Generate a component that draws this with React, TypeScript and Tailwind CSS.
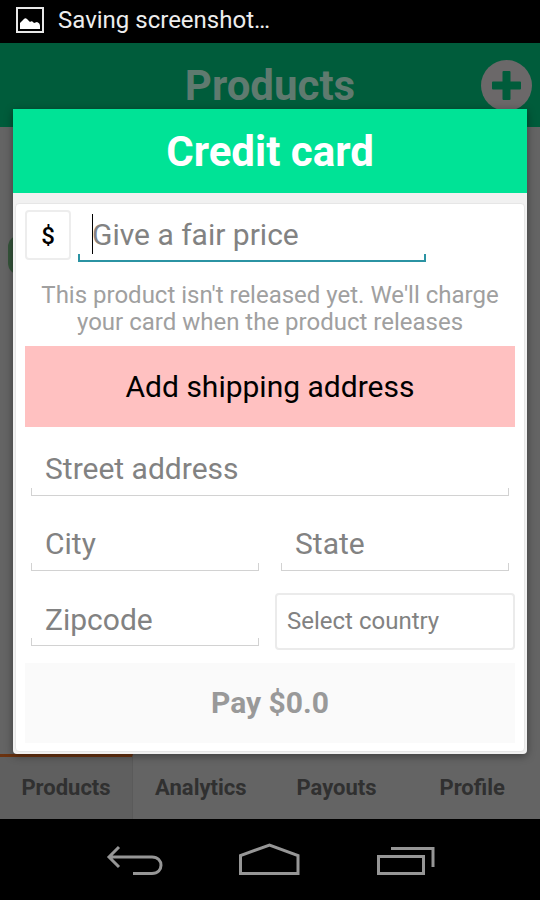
import type { InputHTMLAttributes } from "react";
import clsx from "clsx";

const tabs = ["Products", "Analytics", "Payouts", "Profile"];

interface FieldProps extends InputHTMLAttributes<HTMLInputElement> {
  label: string;
  active?: boolean;
}

function Field({ label, active, className, ...rest }: FieldProps) {
  return (
    <div className={clsx("relative flex min-w-0 flex-col", className)}>
      <input
        aria-label={label}
        placeholder={label}
        className="h-[46px] w-full bg-transparent px-3.5 text-[30px] text-black caret-transparent outline-none placeholder:text-[#828282]"
        {...rest}
      />
      {active && <span className="absolute top-0.5 left-3.5 h-10 w-px bg-black" />}
      <span
        className={clsx(
          "pointer-events-none -mt-1 h-2",
          active ? "border-x-2 border-b-2 border-[#2b93a3]" : "border-x border-b border-[#d2d2d2]"
        )}
      />
    </div>
  );
}

function StatusBar() {
  return (
    <div className="flex h-[43px] items-center gap-3.5 bg-black px-4 pb-1 text-2xl text-[#ededed]">
      <svg width="28" height="26" viewBox="0 0 28 26" fill="none">
        <rect x="1" y="1" width="26" height="24" stroke="#e8e8e8" strokeWidth="2" />
        <path d="M4 22V16Q6 14 7 13Q9 10 11 12L14 15Q16 13 18 16L21 15Q24 16 24 19V22Z" fill="#fff" />
      </svg>
      <p>Saving screenshot…</p>
    </div>
  );
}

function ProductsScreen() {
  return (
    <div className="flex flex-1 flex-col bg-[#646464]">
      <header className="relative flex h-[84px] items-center justify-center bg-[#005c3b]">
        <h1 className="text-[42px] font-bold text-[#5f7a6f]">Products</h1>
        <button aria-label="Add product" className="absolute right-2">
          <svg width="51" height="51" viewBox="0 0 51 51" fill="none">
            <circle cx="25.500" cy="25.500" r="25.500" fill="#6b6869" />
            <path
              d="M22.500 11h6q1 0 1 1v9.500h9.500q1 0 1 1v6q0 1-1 1h-9.500V39q0 1-1 1h-6q-1 0-1-1v-9.500H12q-1 0-1-1v-6q0-1 1-1h9.500V12q0-1 1-1z"
              fill="#005c3b"
            />
          </svg>
        </button>
      </header>
      <main className="flex-1 px-2 pt-[108px]">
        <div className="h-10 w-16 rounded-xl bg-[#35543a]" />
      </main>
      <nav className="flex h-[65px] text-[22px] font-bold text-[#303030]">
        {tabs.map((tab, i) => (
          <a
            key={tab}
            href="#"
            className={clsx(
              "flex items-center justify-center border-t-3 pb-0.5",
              i === 0
                ? "w-[133px] border-t-[#6b3310] border-r border-r-[#5a5a5a] bg-[#5f5f5f]"
                : "flex-1 border-transparent"
            )}
          >
            {tab}
          </a>
        ))}
      </nav>
    </div>
  );
}

function CreditCardDialog() {
  return (
    <section
      role="dialog"
      aria-label="Credit card"
      className="w-full rounded-b-sm bg-[#f1f1f1] shadow-[0_2px_8px_rgba(0,0,0,0.4)]"
    >
      <h2 className="flex h-[84px] items-center justify-center bg-[#00e396] pt-0.5 text-[42px] font-bold text-white">
        Credit card
      </h2>
      <form className="mx-0.5 mt-2.5 mb-0.5 rounded-sm border border-[#e6e6e6] bg-white px-[9px] pt-1.5 pb-2">
        <div className="flex items-start gap-[7px]">
          <span className="flex h-[50px] w-[46px] items-center justify-center rounded-sm border-2 border-[#ededed] pt-0.5 text-2xl font-medium text-black">
            $
          </span>
          <Field label="Give a fair price" active className="mt-0.5 mr-[89px] flex-1" />
        </div>
        <p className="mt-5 text-center text-2xl leading-[27px] text-[#a0a0a0]">
          This product isn't released yet. We'll charge your card when the product releases
        </p>
        <button type="button" className="mt-2.5 h-[81px] w-full bg-[#ffc1c1] text-[30px] text-black">
          Add shipping address
        </button>
        <Field label="Street address" className="mx-1.5 mt-[19px]" />
        <div className="mx-1.5 mt-[25px] grid grid-cols-2 gap-[22px]">
          <Field label="City" />
          <Field label="State" />
        </div>
        <div className="mt-[22px] ml-1.5 flex items-center gap-4">
          <Field label="Zipcode" className="flex-1" />
          <select
            aria-label="Select country"
            defaultValue=""
            className="h-[57px] w-60 appearance-none rounded-sm border-2 border-[#ebebeb] bg-white px-2.5 text-2xl text-[#828282]"
          >
            <option value="">Select country</option>
          </select>
        </div>
        <button
          type="submit"
          disabled
          className="mt-[13px] h-20 w-full bg-[#fafafa] text-[30px] font-bold text-[#999999]"
        >
          Pay $0.0
        </button>
      </form>
    </section>
  );
}

function NavBar() {
  return (
    <div className="flex h-[81px] items-center justify-center gap-[75px] bg-black text-[#969696]">
      <button aria-label="Back">
        <svg width="58" height="34" viewBox="0 0 58 34" fill="none" stroke="currentColor" strokeWidth="3">
          <path d="M14 4L4 14L14 24M4 14H47C59 14 59 30.500 47 30.500H28" />
        </svg>
      </button>
      <button aria-label="Home">
        <svg width="62" height="34" viewBox="0 0 62 34" fill="none" stroke="currentColor" strokeWidth="3">
          <path d="M2.500 30.500V12.500L31.500 2L60 12.500V30.500Z" />
        </svg>
      </button>
      <button aria-label="Recent apps">
        <svg width="60" height="34" viewBox="0 0 60 34" fill="none" stroke="currentColor" strokeWidth="3">
          <path d="M3.500 13.500H48.500V30.500H3.500Z" />
          <path d="M16 5.500H58V24" />
        </svg>
      </button>
    </div>
  );
}

export default function App() {
  return (
    <div className="flex min-h-screen flex-col bg-black font-[Roboto,'Liberation_Sans',sans-serif]">
      <StatusBar />
      <div className="relative flex flex-1 flex-col">
        <ProductsScreen />
        <div className="absolute inset-0 flex items-center px-[13px]">
          <CreditCardDialog />
        </div>
      </div>
      <NavBar />
    </div>
  );
}
